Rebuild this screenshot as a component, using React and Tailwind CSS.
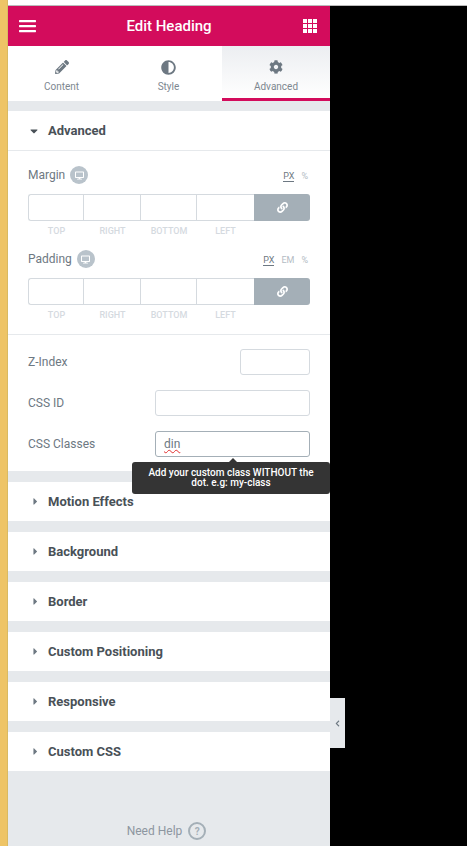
import React from "react";
import { FaPencilAlt, FaAdjust, FaCog, FaLink, FaDesktop, FaCaretDown, FaCaretRight, FaChevronLeft } from "react-icons/fa";

const dims = ["TOP", "RIGHT", "BOTTOM", "LEFT"];
const widths = ["w-[55px]", "w-[57px]", "w-[56px]", "w-[57px]"];

function Responsive() {
  return (
    <span className="ml-[5px] flex h-[18px] w-[18px] items-center justify-center rounded-full bg-[#b9c3cb] text-white">
      <FaDesktop size={9} />
    </span>
  );
}

function Dimensions({ label, units }) {
  return (
    <div>
      <div className="flex h-[18px] items-center justify-between">
        <div className="flex items-center text-[12px] text-[#6d7882]">
          {label}
          <Responsive />
        </div>
        <div className="flex gap-[7px] pr-[2px] pt-[3px] text-[9px] text-[#b4bcc4]">
          {units.map((u, i) => (
            <span key={u} className={i === 0 ? "border-b border-[#6d7882] leading-[10px] text-[#6d7882]" : "leading-[10px]"}>{u}</span>
          ))}
        </div>
      </div>
      <div className="mt-[10px] flex h-[27px]">
        <div className="flex w-[226px] rounded-l-[3px] border border-r-0 border-[#d5dadf] bg-white">
          {dims.map((d, i) => (
            <div key={d} className={`${widths[i]} shrink-0 ${i < 3 ? "border-r border-[#d5dadf]" : ""}`} />
          ))}
        </div>
        <div className="flex w-[56px] items-center justify-center rounded-r-[3px] bg-[#a4afb7] text-white">
          <FaLink size={11} />
        </div>
      </div>
      <div className="mt-[3px] flex w-[226px] pl-[1px] text-center text-[9px] font-medium leading-[14px] text-[#d5dadf]">
        {dims.map((d, i) => (
          <span key={d} className={`${widths[i]} shrink-0`}>{d}</span>
        ))}
      </div>
    </div>
  );
}

function TextRow({ label, width, value, focus, className }) {
  return (
    <div className={`flex h-[26px] items-center justify-between ${className || ""}`}>
      <span className="text-[12px] text-[#6d7882]">{label}</span>
      <div className={`flex h-[26px] ${width} items-center rounded-[3px] border bg-white px-[8px] text-[12px] text-[#6d7882] ${focus ? "border-[#a4afb7]" : "border-[#d5dadf]"}`}>
        {value && <span className="underline decoration-wavy decoration-[#e03030] decoration-1 underline-offset-1">{value}</span>}
      </div>
    </div>
  );
}

function Section({ title }) {
  return (
    <div className="mt-[11px] flex h-[39px] items-center bg-white pl-[22px] text-[#495157]">
      <FaCaretRight size={11} className="text-[#6d7882]" />
      <span className="ml-[7px] text-[13px] font-bold">{title}</span>
    </div>
  );
}

function Tab({ icon, label, active, width }) {
  return (
    <div className={`flex h-[55px] ${width} flex-col items-center pt-[13px] text-[#6d7882] ${active ? "border-b-[3px] border-[#d30c5c] bg-gradient-to-b from-[#eceef1] to-white" : "bg-white"}`}>
      <span className="flex h-[16px] items-center">{icon}</span>
      <span className="mt-[5px] text-[10px] leading-[14px] text-[#7d8790]">{label}</span>
    </div>
  );
}

export default function App() {
  return (
    <div className="flex h-[846px] w-[467px] overflow-hidden bg-black font-['Roboto',sans-serif]">
      <div className="w-[8px] border-r border-[#d9ba62] bg-[#eec466]" />
      <div className="relative flex w-[322px] flex-col">
        <div className="h-[6px] border-b border-[#bbbbbb] bg-white" />
        <div className="flex h-[40px] items-center justify-between bg-[#d30c5c] pl-[11px] pr-[13px] text-white">
          <svg width="18" height="14" viewBox="0 0 18 14" fill="currentColor"><rect y="1" width="17" height="2.2" rx="0.6" /><rect y="6" width="17" height="2.2" rx="0.6" /><rect y="11" width="17" height="2.2" rx="0.6" /></svg>
          <span className="mr-[2px] text-[15px] font-medium">Edit Heading</span>
          <svg width="14" height="14" viewBox="0 0 14 14" fill="currentColor">
            {[0, 5, 10].flatMap((y) => [0, 5, 10].map((x) => <rect key={`${x}${y}`} x={x} y={y} width="4" height="4" />))}
          </svg>
        </div>
        <div className="flex">
          <Tab label="Content" width="w-[107px]" icon={<FaPencilAlt size={14} />} />
          <Tab label="Style" width="w-[107px]" icon={<FaAdjust size={15} />} />
          <Tab label="Advanced" width="w-[108px]" active icon={<FaCog size={14} />} />
        </div>
        <div className="flex-1 overflow-hidden bg-[#e6e9ec] pt-[10px]">
          <div className="bg-white">
            <div className="flex h-[40px] items-center border-b border-[#e6e9ec] pl-[20px] text-[#495157]">
              <FaCaretDown size={12} className="text-[#495157]" />
              <span className="ml-[8px] text-[13px] font-bold">Advanced</span>
            </div>
            <div className="border-b border-[#e6e9ec] px-[20px] pb-[12px] pt-[15px]">
              <Dimensions label="Margin" units={["PX", "%"]} />
              <div className="mt-[12px]"><Dimensions label="Padding" units={["PX", "EM", "%"]} /></div>
            </div>
            <div className="px-[20px] pb-[14px] pt-[14px]">
              <TextRow label="Z-Index" width="w-[70px]" />
              <TextRow label="CSS ID" width="w-[155px]" className="mt-[15px]" />
              <TextRow label="CSS Classes" width="w-[155px]" value="din" focus className="mt-[15px]" />
            </div>
          </div>
          {["Motion Effects", "Background", "Border", "Custom Positioning", "Responsive", "Custom CSS"].map((t) => <Section key={t} title={t} />)}
          <div className="mt-[51px] flex items-center justify-center pr-[5px] text-[12px] text-[#8d96a0]">
            Need Help
            <span className="ml-[6px] flex h-[18px] w-[18px] items-center justify-center rounded-full border-2 border-[#a4afb7] text-[10px] font-bold text-[#a4afb7]">?</span>
          </div>
        </div>
        <div className="absolute left-[124px] top-[462px] h-[32px] w-[198px] rounded-[3px] bg-[#343434] px-[12px] pt-[6px] text-center text-[10px] font-medium leading-[10px] text-white">
          <span className="absolute left-[97px] top-[-4px] h-0 w-0 border-x-[4px] border-b-[4px] border-x-transparent border-b-[#343434]" />
          Add your custom class WITHOUT the dot. e.g: my-class
        </div>
      </div>
      <div className="flex-1">
        <div className="h-[6px] border-b border-[#bbbbbb] bg-white" />
        <div className="mt-[692px] flex h-[50px] w-[15px] items-center justify-center bg-[#e6e9ec] text-[#6d7882]">
          <FaChevronLeft size={7} />
        </div>
      </div>
    </div>
  );
}
